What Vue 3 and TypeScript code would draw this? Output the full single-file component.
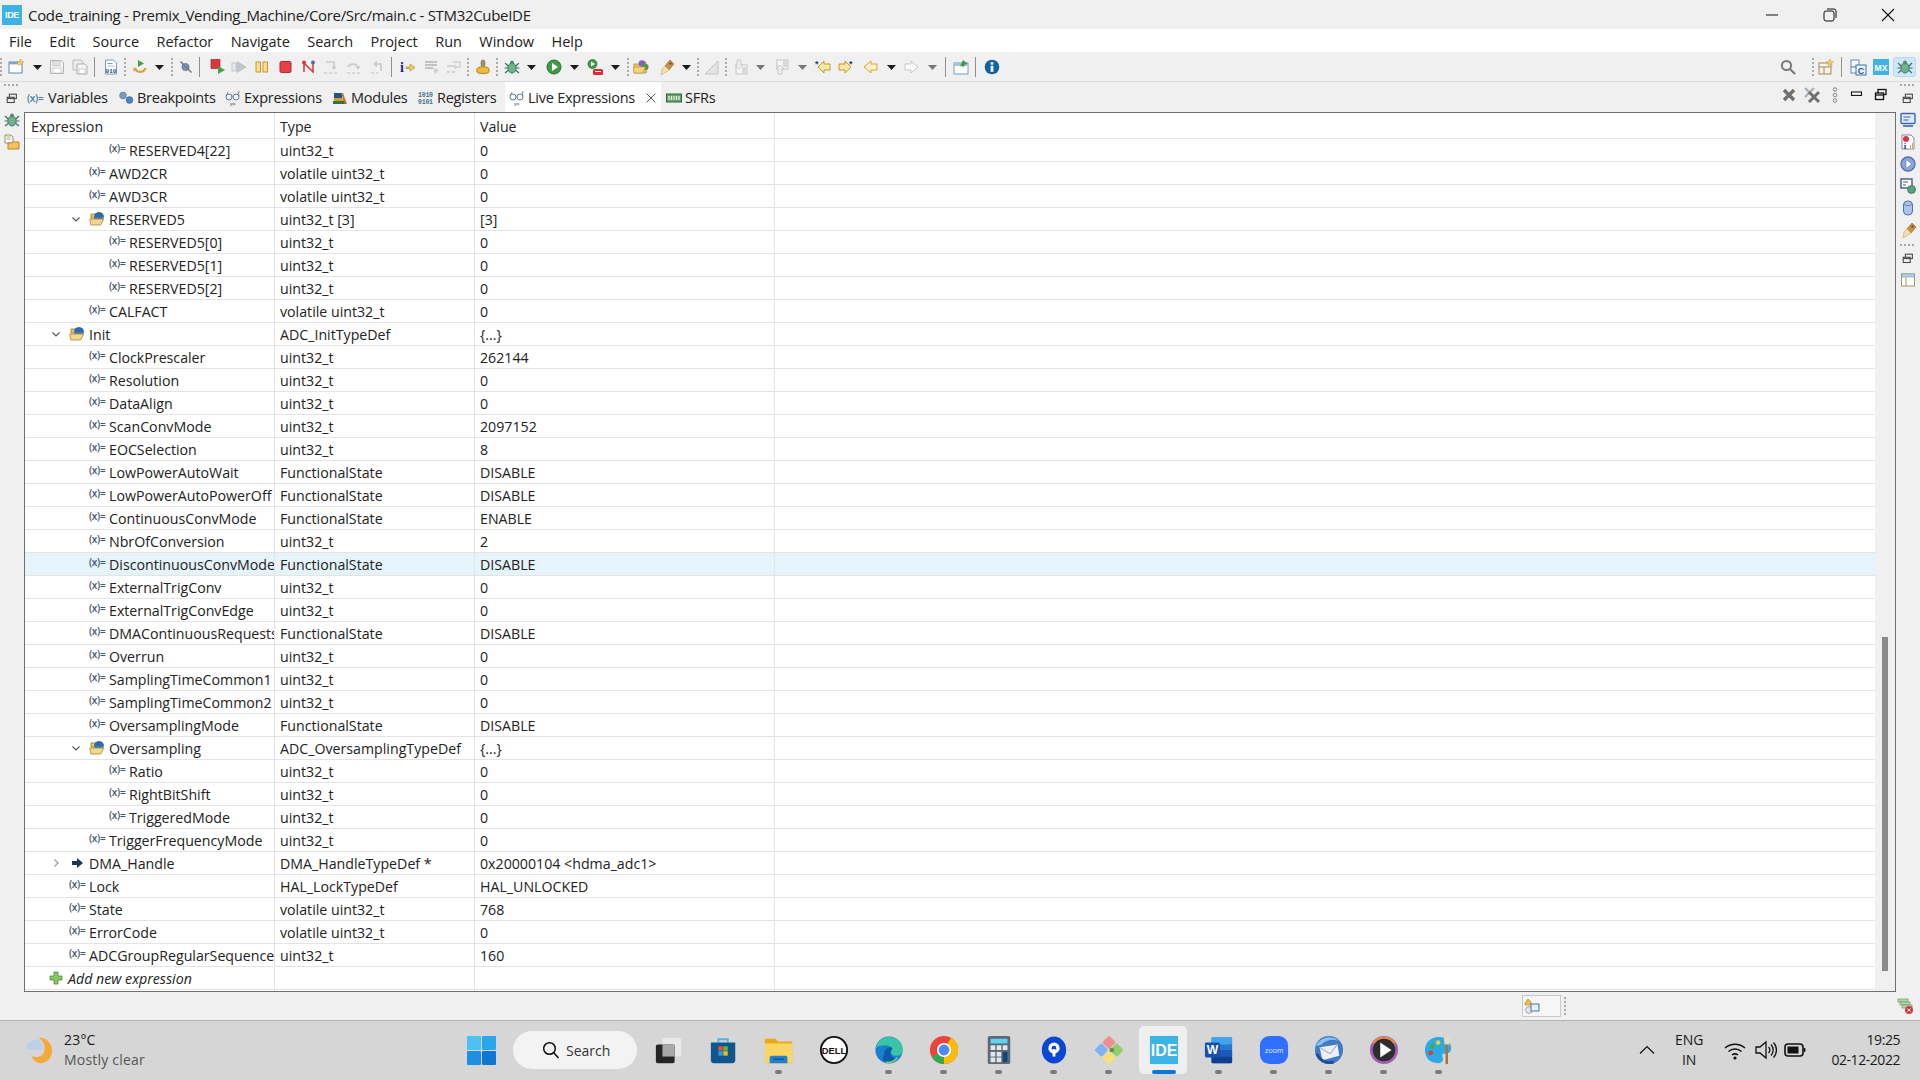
<script setup lang="ts">
import { computed } from 'vue'

type Row = { name: string; type: string; value: string; depth: number; kind?: 'open' | 'ptr'; hot?: boolean }

const icons: Record<string, string> = {
  arrow: '<polygon points="0,6 9,6 4.5,11" fill="#1b1b1b"/>',
  arrowg: '<polygon points="0,6 9,6 4.5,11" fill="#777"/>',
  newf: '<rect x="1" y="3" width="13" height="11" fill="#fff" stroke="#5b86b5"/><rect x="1" y="3" width="9" height="2.4" fill="#7fa6cf"/><path d="M12.5 0l1 2.2 2.3.5-1.7 1.5.4 2.3-2-1.1-2 1.1.4-2.3-1.7-1.5 2.3-.5z" fill="#f2cf55" stroke="#b8962e" stroke-width=".4"/>',
  save: '<path d="M1.5 1.5h11l2 2v11h-13z" fill="#f1f1f1" stroke="#b5b5b5"/><rect x="4" y="2" width="7" height="4.5" fill="#e3e3e3" stroke="#bdbdbd" stroke-width=".7"/><rect x="4" y="9" width="8" height="5" fill="#fff" stroke="#bdbdbd" stroke-width=".7"/>',
  saveall: '<path d="M1 1h8l2 2v8H1z" fill="#ececec" stroke="#bbb"/><path d="M5 5h8l2 2v8H5z" fill="#f4f4f4" stroke="#b0b0b0"/><rect x="7" y="10" width="6" height="4.4" fill="#fff" stroke="#bdbdbd" stroke-width=".7"/>',
  bin: '<path d="M2.5 1h8l3 3v11h-11z" fill="#fff" stroke="#7d9ab8"/><rect x="4.5" y="4" width="5" height="1" fill="#7d9ab8"/><rect x="4.5" y="6.5" width="7" height="1" fill="#a8bdd2"/><text x="8" y="14" text-anchor="middle" font-size="6" font-weight="700" font-family="Liberation Mono" fill="#1f4e85">010</text>',
  skip: '<path d="M3 9a5.5 5.5 0 0 0 10.5 0" fill="none" stroke="#d9a53a" stroke-width="2.4"/><path d="M2 8l3.2 3.5L1 12z" fill="#d9a53a"/><polygon points="6,1 12,4.5 6,8" fill="#4aa04a"/>',
  skipbp: '<circle cx="7.5" cy="8" r="3.6" fill="#7d93ac" stroke="#56697f" stroke-width=".7"/><path d="M2.5 2.5l11 11" stroke="#6d7a88" stroke-width="1.5"/>',
  debugrun: '<rect x="1" y="0.5" width="9" height="9" fill="#d9363e" stroke="#a11d24" stroke-width=".6"/><polygon points="8,7 15,11 8,15" fill="#48a248"/>',
  resume: '<rect x="1" y="4" width="4" height="8" fill="#e6eaf0" stroke="#b8bec6" stroke-width=".8"/><polygon points="6,2.5 15,8 6,13.5" fill="#c3c7cc" stroke="#aeb2b7" stroke-width=".6"/>',
  pause: '<rect x="2" y="3" width="4.5" height="10" fill="#f7dd92" stroke="#c59a2a"/><rect x="9" y="3" width="4.5" height="10" fill="#f7dd92" stroke="#c59a2a"/>',
  stop: '<rect x="2" y="2.5" width="11" height="11" rx="1.5" fill="#e24248" stroke="#b8242b"/>',
  disc: '<path d="M3 13V4l9 9V3" fill="none" stroke="#d9363e" stroke-width="1.5"/><circle cx="3" cy="3.5" r="2" fill="#d9363e"/><circle cx="12" cy="3.5" r="2" fill="#4d6fa5"/>',
  stepin: '<path d="M3 3h8v5" fill="none" stroke="#c9c9c9" stroke-width="1.6"/><path d="M8.5 7.5h5L11 11z" fill="#c9c9c9"/><path d="M1 14h3M6 14h3M11 14h3" stroke="#c0c0c0" stroke-width="1.2"/>',
  stepov: '<path d="M2 8a5.5 5 0 0 1 10 0" fill="none" stroke="#c9c9c9" stroke-width="1.6"/><path d="M9.5 7.5h5L12 11z" fill="#c9c9c9"/><path d="M1 14h3M6 14h3M11 14h3" stroke="#c0c0c0" stroke-width="1.2"/>',
  stepret: '<path d="M11 12V5H6" fill="none" stroke="#c9c9c9" stroke-width="1.6"/><path d="M7 2v6L3 5z" fill="#c9c9c9"/><path d="M1 14h3M6 14h2" stroke="#c0c0c0" stroke-width="1.2"/>',
  instr: '<text x="0" y="13" font-size="14" font-weight="700" font-family="Liberation Serif" fill="#1c2a8c">i</text><path d="M6 8h4V5l5 3.5-5 3.5V9.5H6z" fill="#f3cf5a" stroke="#a68420" stroke-width=".6"/>',
  frame: '<path d="M1 3h12M1 6h12M1 9h8" stroke="#b4b4b4" stroke-width="1.6"/><path d="M9 9l6 2-4 4z" fill="#cfcfcf"/>',
  frame2: '<path d="M1 13h3M6 13h3M1 7h7" stroke="#c9c9c9" stroke-width="1.4"/><path d="M7 3h7v5h-4" fill="none" stroke="#d0d0d0" stroke-width="1.4"/><path d="M10 11l-3-3 3-3z" fill="#d4d4d4"/>',
  chip: '<rect x="6" y="1" width="4" height="7" rx="2" fill="#9a8f7b" stroke="#6d6354" stroke-width=".5"/><path d="M2 10c0-3 12-3 12 0v3c0 2-12 2-12 0z" fill="#f0b93a" stroke="#b8851a"/>',
  bug: '<ellipse cx="8" cy="9" rx="4.2" ry="5" fill="#6fb28f" stroke="#3f7a63"/><circle cx="8" cy="3.5" r="2" fill="#4f8f75"/><path d="M1 4l3 3M15 4l-3 3M0.5 9h3M15.5 9h-3M1 14l3-2.5M15 14l-3-2.5" stroke="#3f6a62" stroke-width="1.1"/>',
  run: '<circle cx="8" cy="8" r="7" fill="#3f9a46" stroke="#2a6f32"/><polygon points="6,4 12,8 6,12" fill="#fff"/>',
  runext: '<circle cx="5.5" cy="5" r="4.5" fill="#3f9a46" stroke="#2a6f32" stroke-width=".7"/><polygon points="4,2.5 8,5 4,7.5" fill="#fff"/><rect x="6" y="10" width="10" height="6" rx="1.5" fill="#e12b31"/><rect x="8" y="12" width="6" height="1" fill="#fff"/>',
  folder: '<path d="M1 5h5l1-2h6v3h2l-2 8H1z" fill="#f1c35b" stroke="#b08a2d" stroke-width=".7"/><circle cx="9" cy="4.5" r="3.3" fill="#7a66b8"/><circle cx="12.5" cy="8" r="3" fill="#4b9a4b"/><path d="M0.5 8h12l-2.5 6H1z" fill="#f6d47f" stroke="#b08a2d" stroke-width=".6"/>',
  pen: '<path d="M12 1l4 4-5 6-4-4z" fill="#c98f4a" stroke="#8b5d28" stroke-width=".6"/><path d="M7 7l4 4-3 2-5 3 1-6z" fill="#f6dfaa" stroke="#c9a66a" stroke-width=".6"/><circle cx="12.5" cy="4.5" r="1.2" fill="#7a4d20"/>',
  marker: '<path d="M1 15L14 2v13z" fill="#e3e3e3" stroke="#c3c3c3"/>',
  annonext: '<rect x="3" y="6" width="11" height="9" fill="#f5f5f5" stroke="#c4c4c4"/><path d="M4 1h4v5h2l-4 4-4-4h2z" fill="#ededed" stroke="#bdbdbd" stroke-width=".7"/><path d="M9 9h4M9 11h4M9 13h4" stroke="#bbb"/>',
  annoprev: '<rect x="3" y="1" width="11" height="9" fill="#f5f5f5" stroke="#c4c4c4"/><path d="M4 15h4v-5h2L6 6l-4 4h2z" fill="#ededed" stroke="#bdbdbd" stroke-width=".7"/><path d="M9 3h4M9 5h4M9 7h4" stroke="#bbb"/>',
  lasted: '<text x="0" y="8" font-size="9" font-weight="700" font-family="Liberation Sans" fill="#1f3d7a">*</text><path d="M15 5v6H9v3L3 8l6-6v3z" fill="#f9e8a8" stroke="#c69a2a"/>',
  nexted: '<text x="11" y="8" font-size="9" font-weight="700" font-family="Liberation Sans" fill="#1f3d7a">*</text><path d="M1 5v6h6v3l6-6-6-6v3z" fill="#f9e8a8" stroke="#c69a2a"/>',
  back: '<path d="M15 5v6H9v3L2 8l7-6v3z" fill="#fdf1c5" stroke="#d6a53a"/>',
  fwd: '<path d="M1 5v6h6v3l7-6-7-6v3z" fill="#fafafa" stroke="#c9c9c9"/>',
  pin: '<rect x="1" y="4" width="14" height="11" fill="#fff" stroke="#7d9ab8"/><rect x="1" y="4" width="14" height="3" fill="#a9c3df"/><path d="M10 1l5 4-3 .6-2 3-1-2.2-2 1z" fill="#3c9a4a"/>',
  info: '<circle cx="8" cy="8" r="7.3" fill="#12619f"/><rect x="6.6" y="6.8" width="2.8" height="6" fill="#fff"/><rect x="6.6" y="3.2" width="2.8" height="2.4" fill="#fff"/>',
  search: '<circle cx="6.5" cy="6.5" r="4.6" fill="none" stroke="#7a7a7a" stroke-width="2"/><path d="M10 10l5 5" stroke="#7a7a7a" stroke-width="2.2"/>',
  perspadd: '<rect x="1" y="4" width="12" height="11" fill="#f7f3e7" stroke="#a08a5f"/><path d="M1 8h12M6 8v7" stroke="#a08a5f"/><path d="M12 0l1 2.4 2.6.3-2 1.7.6 2.5-2.2-1.3-2.2 1.3.6-2.5-2-1.7 2.6-.3z" fill="#f2cf55" stroke="#b8962e" stroke-width=".4"/>',
  cpersp: '<rect x="1" y="1" width="8" height="7" fill="#f4f7fb" stroke="#6c8db0"/><rect x="1" y="8" width="6" height="6" fill="#f4f7fb" stroke="#6c8db0"/><rect x="6" y="6" width="10" height="10" fill="#eaf2fb" stroke="#3d76a8"/><text x="11" y="14.5" text-anchor="middle" font-size="9" font-weight="700" font-family="Liberation Sans" fill="#245a91">C</text>',
  mx: '<rect x="0" y="0" width="16" height="16" fill="#3cb4e5"/><text x="8" y="11.5" text-anchor="middle" font-size="8.6" font-weight="700" font-family="Liberation Sans" fill="#fff">MX</text>',
  restore: '<rect x="5" y="2.5" width="8" height="5" fill="none" stroke="#444" stroke-width="1.2"/><rect x="2.5" y="6" width="8" height="6" fill="#f0f0f0" stroke="#444" stroke-width="1.2"/><path d="M2.5 7.5h8" stroke="#444" stroke-width="1.2"/>',
  rmall: '<path d="M3 3l10 10M13 3L3 13" stroke="#6f6f6f" stroke-width="3.4"/>',
  rmall2: '<path d="M1 1l9 9M10 1L1 10" stroke="#a7b0b8" stroke-width="2.4"/><path d="M5 5l10 10M15 5L5 15" stroke="#6f6f6f" stroke-width="3"/>',
  kebab: '<circle cx="8" cy="2.5" r="1.8" fill="none" stroke="#8a8a8a"/><circle cx="8" cy="8" r="1.8" fill="none" stroke="#8a8a8a"/><circle cx="8" cy="13.5" r="1.8" fill="none" stroke="#8a8a8a"/>',
  vmin: '<rect x="1.5" y="5" width="10" height="3.4" fill="#fff" stroke="#111" stroke-width="1.1"/>',
  vres: '<rect x="5" y="2.5" width="8" height="5" fill="none" stroke="#111" stroke-width="1.3"/><rect x="2.5" y="6" width="8" height="6.5" fill="#f0f0f0" stroke="#111" stroke-width="1.3"/><path d="M2.5 8h8" stroke="#111" stroke-width="1.3"/>',
  files: '<path d="M1 1h6l2 2v6H1z" fill="#fff" stroke="#9c8a62"/><path d="M2.5 3h4M2.5 5h4" stroke="#9c8a62" stroke-width=".8"/><path d="M4 9h4l1-1h6v7H4z" fill="#f4c35a" stroke="#b08a2d"/>',
  console: '<rect x="1" y="1.5" width="14" height="10" rx="1" fill="#dfe9f7" stroke="#3d68ad" stroke-width="1.4"/><path d="M3.5 5h7M3.5 8h5" stroke="#3d68ad" stroke-width="1.1"/><path d="M3 14h10" stroke="#3d68ad" stroke-width="1.6"/>',
  memory: '<path d="M2 1h9l3 3v11H2z" fill="#fff" stroke="#7c8aa5"/><circle cx="6" cy="5" r="3" fill="#d9363e"/><text x="5" y="15" text-anchor="middle" font-size="9" font-weight="700" font-family="Liberation Serif" fill="#1c3a8c">i</text><path d="M10 14v-3h1v3zM12 14V9h1v5z" fill="#e3a82b"/>',
  play: '<circle cx="8" cy="8" r="7" fill="#8ea6d8" stroke="#516fb0" stroke-width="1.3"/><polygon points="6,3.5 12,8 6,12.5" fill="#fff" stroke="#516fb0" stroke-width=".6"/>',
  mbug: '<rect x="1" y="1" width="11" height="9" fill="#fff" stroke="#3d5a8c" stroke-width="1.4"/><path d="M3 4h5M3 7h3" stroke="#3d5a8c"/><circle cx="11.5" cy="11.5" r="4" fill="#5aa27d" stroke="#2d6d52" stroke-width=".7"/>',
  cyl: '<rect x="3.5" y="1" width="9" height="14" rx="4" fill="#a9c3ea" stroke="#4c73ad"/><path d="M3.5 4c2 2 7 2 9 0" fill="none" stroke="#4c73ad" stroke-width=".8"/>',
  layout: '<rect x="1.5" y="2" width="13" height="12" fill="#fff" stroke="#a99465"/><rect x="1.5" y="2" width="13" height="3" fill="#b4d0e8" stroke="#6f93b4" stroke-width=".6"/><path d="M6 5v9" stroke="#a99465"/>',
  plus: '<path d="M6 2h4v4h4v4h-4v4H6v-4H2V6h4z" fill="#8cc36b" stroke="#4c8a35" stroke-width=".8"/>',
  ptr: '<path d="M3 6h5V3l6 5-6 5v-3H3z" fill="#1f3558"/>',
  open: '<path d="M2 6V3h5l1 1h5v3H2z" fill="#eec46a" stroke="#a98930"/><circle cx="10" cy="6" r="4.8" fill="#3a7dbc"/><path d="M5.2 6a4.8 4.8 0 0 1 9.6 0z" fill="#2f6aa8"/><path d="M0.7 8h14l-3 6H1.8z" fill="#f5d68e" stroke="#a98930" stroke-width=".8"/>',
  glasses: '<circle cx="4" cy="7" r="3" fill="none" stroke="#5f7a8c"/><circle cx="11" cy="7" r="3" fill="none" stroke="#5f7a8c"/><path d="M7 6.5c.5-.5.6-.5 1 0M1 6l2-4M14 6l-1-4h2" stroke="#5f7a8c" stroke-width=".8" fill="none"/><text x="7.5" y="15.5" text-anchor="middle" font-size="5.5" font-family="Liberation Sans" fill="#4d6272">x=</text>',
  bp: '<circle cx="5" cy="5.5" r="3.4" fill="#7f99b8" stroke="#5b7694" stroke-width=".6"/><circle cx="11.5" cy="10" r="3.4" fill="#4a85c2" stroke="#336a9e" stroke-width=".6"/>',
  books: '<rect x="1" y="11" width="13" height="3" fill="#3b6f4c"/><rect x="2" y="8" width="10" height="3" fill="#d0a12f"/><rect x="2" y="3" width="8" height="5" fill="#2c4e86"/><path d="M11 3l4 11h-2L9 3z" fill="#a9812d"/>',
  reg: '<text x="0" y="7" font-size="6.6" font-family="Liberation Mono" font-weight="700" fill="#48738c">1010</text><text x="0" y="14" font-size="6.6" font-family="Liberation Mono" font-weight="700" fill="#48738c">0101</text>',
  sfr: '<rect x="0.5" y="4" width="15" height="8" fill="#6aa06a" stroke="#2e6a3c"/><path d="M3 6v4M5.5 6v4M8 6v4M10.5 6v4M13 6v4" stroke="#e7f2e7" stroke-width="1.3"/>',
  close: '<path d="M3 3l10 10M13 3L3 13" stroke="#3a3a3a" stroke-width="1"/>',
  boot: '<path d="M1 5l3-4 3 3v3H1z" fill="#f0bf44" stroke="#a07f1f" stroke-width=".6"/><circle cx="5" cy="12" r="3.4" fill="#e6e6e6" stroke="#8a8a8a" stroke-width=".7"/><rect x="7" y="6" width="8" height="7" fill="#e7f0fa" stroke="#4c73ad"/>',
  errlog: '<rect x="1" y="1" width="10" height="3" fill="#b9d3b0" stroke="#6f9a66" stroke-width=".7"/><rect x="3" y="4" width="10" height="3" fill="#b9d3b0" stroke="#6f9a66" stroke-width=".7"/><rect x="5" y="7" width="10" height="3" fill="#b9d3b0" stroke="#6f9a66" stroke-width=".7"/><circle cx="12" cy="12" r="4" fill="#cf3b42"/><path d="M10.5 10.5l3 3M13.5 10.5l-3 3" stroke="#fff"/>'
}

const tbIcons: Record<string, string> = {
  taskview: '<rect x="9" y="3" width="20" height="20" rx="2" fill="#e9e9e9"/><rect x="2" y="10" width="20" height="20" rx="2" fill="#252525"/><rect x="9" y="10" width="13" height="13" fill="#a9a9a9"/>',
  store: '<path d="M10 8V4.5h10V8" fill="none" stroke="#4ab5ea" stroke-width="2"/><path d="M2 8h26v19a3 3 0 0 1-3 3H5a3 3 0 0 1-3-3z" fill="#11558f"/><rect x="10" y="12" width="4.7" height="4.7" fill="#e8522d"/><rect x="15.3" y="12" width="4.7" height="4.7" fill="#6cb52d"/><rect x="10" y="17.3" width="4.7" height="4.7" fill="#2b9be8"/><rect x="15.3" y="17.3" width="4.7" height="4.7" fill="#f6bb16"/>',
  folder: '<path d="M1 4h11l3 3h15v23H1z" fill="#e7ac1e"/><rect x="1" y="9" width="29" height="21" rx="1" fill="#fbd563"/><path d="M6 30v-6a2 2 0 0 1 2-2h15a2 2 0 0 1 2 2v6z" fill="#1e82cc"/><rect x="10" y="25" width="11" height="1.4" fill="#0c4f8c"/>',
  dell: '<circle cx="16" cy="16" r="14" fill="#fff" stroke="#111" stroke-width="2"/><text x="16" y="20" text-anchor="middle" font-size="10" font-weight="700" font-family="Liberation Sans" fill="#111">DELL</text>',
  edge: '<circle cx="16" cy="16" r="14.5" fill="#1b7fd0"/><path d="M2 14C4 4 14 0 21 3c6 2 10 8 9.500 14-.5 4-5 6-9 5-3-1-4-3-3-5 1-3-1-6-6-6-5 0-9 1-10.500 3z" fill="#38c6a6"/><path d="M11 20c0-4 3-7 7-7 2 0 2 2 0 4-1 3 0 7 5 8-3 4-9 5-13 2-1-2-1-4 1-7z" fill="#0f5aa8"/><path d="M25 24c-3 4-8 6-12 5" stroke="#6fd36f" stroke-width="2" fill="none"/>',
  chrome: '<circle cx="16" cy="16" r="15" fill="#e8453c"/><path d="M16 16L3 23.5A15 15 0 0 0 16 31l7.5-13z" fill="#34a853"/><path d="M16 16h15a15 15 0 0 1-15 15z" fill="#fbbc05"/><path d="M16 16L23.5 3A15 15 0 0 1 31 16z" fill="#fbbc05"/><circle cx="16" cy="16" r="7.5" fill="#fff"/><circle cx="16" cy="16" r="5.8" fill="#4c8bf5"/>',
  calc: '<rect x="4" y="1" width="24" height="30" rx="2" fill="#5d6a75"/><rect x="7" y="4" width="18" height="5" fill="#5fd3f3"/><g fill="#e3e7ea"><rect x="7" y="11" width="5" height="5"/><rect x="13.5" y="11" width="5" height="5"/><rect x="20" y="11" width="5" height="5"/><rect x="7" y="18" width="5" height="5"/><rect x="13.5" y="18" width="5" height="5"/><rect x="7" y="24" width="5" height="5"/><rect x="13.5" y="24" width="5" height="5"/></g><rect x="20" y="18" width="5" height="11" fill="#14467a"/>',
  pin: '<ellipse cx="16" cy="16" rx="13" ry="14.5" fill="#0a48d4"/><circle cx="16" cy="14" r="6" fill="#fff"/><circle cx="16" cy="14" r="2.5" fill="#0a48d4"/><rect x="14.5" y="15" width="3" height="8" fill="#fff"/>',
  git: '<g transform="rotate(45 16 16)"><rect x="5" y="5" width="10.5" height="10.5" rx="1.5" fill="#ee8e8e"/><rect x="16.5" y="5" width="10.5" height="10.5" rx="1.5" fill="#8fd06c"/><rect x="16.5" y="16.5" width="10.5" height="10.5" rx="1.5" fill="#f7e17a"/><rect x="5" y="16.5" width="10.5" height="10.5" rx="1.5" fill="#7fb2f5"/></g><circle cx="19" cy="16" r="2.5" fill="#6b8f42"/>',
  ide: '<rect x="1" y="1" width="30" height="30" fill="#3cb4e5"/><text x="16" y="22" text-anchor="middle" font-size="17" font-weight="700" font-family="Liberation Sans" fill="#fff">IDE</text>',
  word: '<rect x="8" y="2" width="22" height="28" rx="2" fill="#2a77d0"/><rect x="8" y="2" width="22" height="8" rx="2" fill="#41a5ee"/><rect x="8" y="16" width="22" height="7" fill="#185abd"/><rect x="8" y="23" width="22" height="7" rx="1" fill="#103f91"/><rect x="1" y="8" width="16" height="16" rx="1.5" fill="#1450ad"/><text x="9" y="20.5" text-anchor="middle" font-size="13" font-weight="700" font-family="Liberation Sans" fill="#fff">W</text>',
  zoom: '<rect x="1" y="1" width="30" height="30" rx="10" fill="#2e6fff"/><text x="16" y="19" text-anchor="middle" font-size="8" font-family="Liberation Sans" fill="#dfe9ff">zoom</text>',
  bird: '<circle cx="16" cy="16" r="15" fill="#3f7cc4"/><path d="M2 12C6 3 17-1 26 6c-6-2-13-1-18 4z" fill="#8cc0ee"/><path d="M6 13l19-3 2 12-18 5z" fill="#eef0f6"/><path d="M6 13l11 7 8-10" fill="none" stroke="#a8b5cc" stroke-width="1.2"/><path d="M3 20c3 7 10 11 18 9" stroke="#1d4f98" stroke-width="3" fill="none"/>',
  player: '<circle cx="16" cy="16" r="15" fill="#a25fb0"/><path d="M3 9A15 15 0 0 1 29 9z" fill="#e88a45"/><circle cx="16" cy="16" r="12" fill="#2d2d2d"/><polygon points="12,8 24,16 12,24" fill="#fff"/>',
  paint: '<path d="M16 2c8 0 13 5 13 12 0 5-4 6-7 6-3 0-3 2-2 4s0 6-5 6C6 30 1 24 1 16 1 8 7 2 16 2z" fill="#2fa8e6"/><circle cx="9" cy="12" r="2.6" fill="#3fae49"/><circle cx="7" cy="19" r="2.6" fill="#d8432e"/><circle cx="15" cy="8" r="2.4" fill="#f2d02e"/><rect x="23" y="9" width="2.6" height="22" fill="#a7762b"/><path d="M21 3h7l-1 7h-5z" fill="#e8dcc0"/>',
  wifi: '<g fill="none" stroke="#111" stroke-width="1.5"><path d="M2 10a15 15 0 0 1 20 0"/><path d="M5.5 13.5a10 10 0 0 1 13 0"/><path d="M9 17a5 5 0 0 1 6 0"/></g><circle cx="12" cy="20" r="1.6" fill="#111"/>',
  sound: '<path d="M3 9h4l6-5v16l-6-5H3z" fill="none" stroke="#111" stroke-width="1.3"/><g fill="none" stroke="#111" stroke-width="1.3"><path d="M15.5 9a4 4 0 0 1 0 6"/><path d="M18 6.5a8 8 0 0 1 0 11"/><path d="M20.5 4.5a11 11 0 0 1 0 15"/></g>',
  battery: '<rect x="2" y="6" width="18" height="12" rx="3" fill="none" stroke="#111" stroke-width="1.6"/><rect x="4.5" y="8.5" width="11" height="7" fill="#111"/><rect x="20.5" y="10" width="2" height="4" rx="1" fill="#111"/>'
}

const menus = ['File', 'Edit', 'Source', 'Refactor', 'Navigate', 'Search', 'Project', 'Run', 'Window', 'Help']

// left edge of every toolbar item, the cell width is the distance to the next one
const toolbarStops: [string, number][] = [
  ['grip', 2], ['newf', 10], ['arrow', 35], ['save', 51], ['saveall', 74], ['sep', 96], ['bin', 105], ['grip', 126],
  ['skip', 134], ['arrow', 157], ['grip', 173], ['skipbp', 180], ['sep', 201], ['debugrun', 212], ['resume', 233],
  ['pause', 256], ['stop', 280], ['disc', 303], ['stepin', 325], ['stepov', 348], ['stepret', 372], ['sep', 393],
  ['instr', 402], ['frame', 426], ['frame2', 448], ['grip', 469], ['chip', 477], ['grip', 498], ['bug', 506],
  ['arrow', 529], ['run', 548], ['arrow', 572], ['runext', 589], ['arrow', 613], ['grip', 629], ['folder', 635],
  ['pen', 660], ['arrow', 684], ['grip', 699], ['marker', 706], ['grip', 727], ['annonext', 735], ['arrowg', 758],
  ['annoprev', 776], ['arrowg', 800], ['lasted', 817], ['nexted', 840], ['back', 864], ['arrow', 889], ['fwd', 906],
  ['arrowg', 930], ['sep', 947], ['pin', 955], ['sep', 977], ['info', 986]
]

const toolbar = computed(() =>
  toolbarStops.map(([name, at], i) => ({
    name,
    width: (toolbarStops[i + 1]?.[1] ?? at + 16) - at
  }))
)

const tabs = [
  { label: 'Variables', icon: 'x', width: 91 },
  { label: 'Breakpoints', icon: 'bp', width: 107 },
  { label: 'Expressions', icon: 'glasses', width: 107 },
  { label: 'Modules', icon: 'books', width: 86 },
  { label: 'Registers', icon: 'reg', width: 90 },
  { label: 'Live Expressions', icon: 'glasses', width: 156, active: true },
  { label: 'SFRs', icon: 'sfr', width: 60 }
]

const rightIcons = ['restore', 'console', 'memory', 'play', 'mbug', 'cyl', 'pen']

const rows: Row[] = [
  { name: 'RESERVED4[22]', type: 'uint32_t', value: '0', depth: 2 },
  { name: 'AWD2CR', type: 'volatile uint32_t', value: '0', depth: 1 },
  { name: 'AWD3CR', type: 'volatile uint32_t', value: '0', depth: 1 },
  { name: 'RESERVED5', type: 'uint32_t [3]', value: '[3]', depth: 1, kind: 'open' },
  { name: 'RESERVED5[0]', type: 'uint32_t', value: '0', depth: 2 },
  { name: 'RESERVED5[1]', type: 'uint32_t', value: '0', depth: 2 },
  { name: 'RESERVED5[2]', type: 'uint32_t', value: '0', depth: 2 },
  { name: 'CALFACT', type: 'volatile uint32_t', value: '0', depth: 1 },
  { name: 'Init', type: 'ADC_InitTypeDef', value: '{...}', depth: 0, kind: 'open' },
  { name: 'ClockPrescaler', type: 'uint32_t', value: '262144', depth: 1 },
  { name: 'Resolution', type: 'uint32_t', value: '0', depth: 1 },
  { name: 'DataAlign', type: 'uint32_t', value: '0', depth: 1 },
  { name: 'ScanConvMode', type: 'uint32_t', value: '2097152', depth: 1 },
  { name: 'EOCSelection', type: 'uint32_t', value: '8', depth: 1 },
  { name: 'LowPowerAutoWait', type: 'FunctionalState', value: 'DISABLE', depth: 1 },
  { name: 'LowPowerAutoPowerOff', type: 'FunctionalState', value: 'DISABLE', depth: 1 },
  { name: 'ContinuousConvMode', type: 'FunctionalState', value: 'ENABLE', depth: 1 },
  { name: 'NbrOfConversion', type: 'uint32_t', value: '2', depth: 1 },
  { name: 'DiscontinuousConvMode', type: 'FunctionalState', value: 'DISABLE', depth: 1, hot: true },
  { name: 'ExternalTrigConv', type: 'uint32_t', value: '0', depth: 1 },
  { name: 'ExternalTrigConvEdge', type: 'uint32_t', value: '0', depth: 1 },
  { name: 'DMAContinuousRequests', type: 'FunctionalState', value: 'DISABLE', depth: 1 },
  { name: 'Overrun', type: 'uint32_t', value: '0', depth: 1 },
  { name: 'SamplingTimeCommon1', type: 'uint32_t', value: '0', depth: 1 },
  { name: 'SamplingTimeCommon2', type: 'uint32_t', value: '0', depth: 1 },
  { name: 'OversamplingMode', type: 'FunctionalState', value: 'DISABLE', depth: 1 },
  { name: 'Oversampling', type: 'ADC_OversamplingTypeDef', value: '{...}', depth: 1, kind: 'open' },
  { name: 'Ratio', type: 'uint32_t', value: '0', depth: 2 },
  { name: 'RightBitShift', type: 'uint32_t', value: '0', depth: 2 },
  { name: 'TriggeredMode', type: 'uint32_t', value: '0', depth: 2 },
  { name: 'TriggerFrequencyMode', type: 'uint32_t', value: '0', depth: 1 },
  { name: 'DMA_Handle', type: 'DMA_HandleTypeDef *', value: '0x20000104 <hdma_adc1>', depth: 0, kind: 'ptr' },
  { name: 'Lock', type: 'HAL_LockTypeDef', value: 'HAL_UNLOCKED', depth: 0 },
  { name: 'State', type: 'volatile uint32_t', value: '768', depth: 0 },
  { name: 'ErrorCode', type: 'volatile uint32_t', value: '0', depth: 0 },
  { name: 'ADCGroupRegularSequence', type: 'uint32_t', value: '160', depth: 0 }
]

const taskbarApps = [
  { icon: 'taskview', dot: false },
  { icon: 'store', dot: false },
  { icon: 'folder', dot: true },
  { icon: 'dell', dot: false },
  { icon: 'edge', dot: true },
  { icon: 'chrome', dot: true },
  { icon: 'calc', dot: true },
  { icon: 'pin', dot: true },
  { icon: 'git', dot: true },
  { icon: 'ide', dot: false, active: true },
  { icon: 'word', dot: true },
  { icon: 'zoom', dot: true },
  { icon: 'bird', dot: true },
  { icon: 'player', dot: true },
  { icon: 'paint', dot: true }
]
</script>

<template>
  <div class="ide">
    <header class="titlebar">
      <span class="titlebar__logo">IDE</span>
      <span class="titlebar__text">Code_training - Premix_Vending_Machine/Core/Src/main.c - STM32CubeIDE</span>
      <div class="winctl">
        <svg viewBox="0 0 16 16" class="winctl__btn"><path d="M2 8h12" stroke="#111" stroke-width="1" /></svg>
        <svg viewBox="0 0 16 16" class="winctl__btn"><rect x="2" y="4" width="10" height="10" rx="2" fill="none" stroke="#111" /><path d="M5 2h7a2 2 0 0 1 2 2v7" fill="none" stroke="#111" /></svg>
        <svg viewBox="0 0 16 16" class="winctl__btn"><path d="M2 2l12 12M14 2L2 14" stroke="#111" stroke-width="1.1" /></svg>
      </div>
    </header>

    <nav class="menubar">
      <span v-for="m in menus" :key="m">{{ m }}</span>
    </nav>

    <div class="toolbar">
      <div v-for="(t, i) in toolbar" :key="i" class="toolbar__cell" :style="{ width: t.width + 'px' }">
        <span v-if="t.name === 'grip'" class="grip"></span>
        <span v-else-if="t.name === 'sep'" class="sep"></span>
        <svg v-else class="ic" viewBox="0 0 16 16" v-html="icons[t.name]"></svg>
      </div>
      <div class="toolbar__right">
        <svg class="ic" viewBox="0 0 16 16" v-html="icons.search"></svg>
        <span class="grip"></span>
        <svg class="ic" viewBox="0 0 16 16" v-html="icons.perspadd"></svg>
        <span class="sep"></span>
        <svg class="ic" viewBox="0 0 16 16" v-html="icons.cpersp"></svg>
        <svg class="ic" viewBox="0 0 16 16" v-html="icons.mx"></svg>
        <span class="persp-on"><svg class="ic" viewBox="0 0 16 16" v-html="icons.bug"></svg></span>
      </div>
    </div>

    <div class="workbench">
      <aside class="stack stack--left">
        <span class="hgrip"></span>
        <svg class="ic ic--sm" viewBox="0 0 16 16" v-html="icons.restore"></svg>
        <svg class="ic" viewBox="0 0 16 16" v-html="icons.bug"></svg>
        <svg class="ic" viewBox="0 0 16 16" v-html="icons.files"></svg>
      </aside>

      <main class="view">
        <div class="tabs">
          <div
            v-for="t in tabs"
            :key="t.label"
            class="tab"
            :class="{ 'tab--active': t.active }"
            :style="{ width: t.width + 'px' }"
          >
            <span v-if="t.icon === 'x'" class="var var--tab">(x)=</span>
            <svg v-else class="ic" viewBox="0 0 16 16" v-html="icons[t.icon]"></svg>
            <span class="tab__label">{{ t.label }}</span>
            <svg v-if="t.active" class="tab__close" viewBox="0 0 16 16" v-html="icons.close"></svg>
          </div>
          <div class="tabs__tools">
            <svg class="ic" viewBox="0 0 16 16" v-html="icons.rmall"></svg>
            <svg class="ic" viewBox="0 0 16 16" v-html="icons.rmall2"></svg>
            <svg class="ic" viewBox="0 0 16 16" v-html="icons.kebab"></svg>
            <svg class="ic" viewBox="0 0 16 16" v-html="icons.vmin"></svg>
            <svg class="ic" viewBox="0 0 16 16" v-html="icons.vres"></svg>
          </div>
        </div>

        <div class="tree">
          <div class="tree__body">
            <div class="row row--head">
              <div class="cell cell--expr"><span class="head">Expression</span></div>
              <div class="cell cell--type">Type</div>
              <div class="cell cell--value">Value</div>
              <div class="cell cell--rest"></div>
            </div>
            <div v-for="r in rows" :key="r.name" class="row" :class="{ 'row--hot': r.hot }">
              <div class="cell cell--expr">
                <span class="expr" :class="'expr--d' + r.depth">
                  <svg v-if="r.kind === 'open'" class="twist" viewBox="0 0 10 10"><path d="M1.5 3.5L5 7l3.500-3.500" fill="none" stroke="#555" stroke-width="1.2" /></svg>
                  <svg v-else-if="r.kind === 'ptr'" class="twist" viewBox="0 0 10 10"><path d="M3.5 1.500L7 5 3.500 8.500" fill="none" stroke="#999" stroke-width="1.2" /></svg>
                  <span v-if="!r.kind" class="var">(x)=</span>
                  <svg v-else class="ic" viewBox="0 0 16 16" v-html="icons[r.kind]"></svg>
                  <span class="expr__name">{{ r.name }}</span>
                </span>
              </div>
              <div class="cell cell--type">{{ r.type }}</div>
              <div class="cell cell--value">{{ r.value }}</div>
              <div class="cell cell--rest"></div>
            </div>
            <div class="row">
              <div class="cell cell--expr row-add">
                <svg class="ic" viewBox="0 0 16 16" v-html="icons.plus"></svg>
                <em>Add new expression</em>
              </div>
              <div class="cell cell--type"></div>
              <div class="cell cell--value"></div>
              <div class="cell cell--rest"></div>
            </div>
            <div class="row row--stub">
              <div class="cell cell--expr"></div>
              <div class="cell cell--type"></div>
              <div class="cell cell--value"></div>
              <div class="cell cell--rest"></div>
            </div>
          </div>
          <div class="scroll"><span class="scroll__thumb"></span></div>
        </div>
      </main>

      <aside class="stack stack--right">
        <span class="hgrip"></span>
        <svg v-for="n in rightIcons" :key="n" class="ic" :class="{ 'ic--sm': n === 'restore' }" viewBox="0 0 16 16" v-html="icons[n]"></svg>
        <span class="hgrip"></span>
        <svg class="ic ic--sm" viewBox="0 0 16 16" v-html="icons.restore"></svg>
        <svg class="ic" viewBox="0 0 16 16" v-html="icons.layout"></svg>
      </aside>
    </div>

    <footer class="status">
      <span class="status__box"><svg class="ic" viewBox="0 0 16 16" v-html="icons.boot"></svg></span>
      <span class="grip"></span>
      <svg class="ic status__err" viewBox="0 0 16 16" v-html="icons.errlog"></svg>
    </footer>

    <div class="taskbar">
      <div class="weather">
        <svg class="weather__icon" viewBox="0 0 30 32">
          <path d="M14 3c10-1 15 7 15 14 0 8-7 14-14 13-4-1-7-4-8-7 9 2 14-2 14-9 0-5-3-9-7-11z" fill="#f4a93a" />
          <path d="M5 16a4 4 0 0 1 1-8 6 6 0 0 1 11 1 4 4 0 0 1 0 7z" fill="#bcd0ea" />
        </svg>
        <div class="weather__text">
          <span>23°C</span>
          <span class="weather__sub">Mostly clear</span>
        </div>
      </div>
      <svg class="start" viewBox="0 0 30 30">
        <rect x="0" y="0" width="14.5" height="14.5" rx="1" fill="#4cc2f1" />
        <rect x="15.5" y="0" width="14.5" height="14.5" rx="1" fill="#2aa6ec" />
        <rect x="0" y="15.5" width="14.5" height="14.5" rx="1" fill="#1d90e4" />
        <rect x="15.5" y="15.5" width="14.5" height="14.5" rx="1" fill="#0c78d4" />
      </svg>
      <div class="pill">
        <svg class="pill__icon" viewBox="0 0 18 18"><circle cx="7.5" cy="7.5" r="5.8" fill="none" stroke="#111" stroke-width="1.5" /><path d="M11.5 11.5l5 5.5" stroke="#111" stroke-width="1.6" /></svg>
        <span>Search</span>
      </div>
      <div class="apps">
        <div v-for="a in taskbarApps" :key="a.icon" class="app" :class="{ 'app--on': a.active }">
          <svg class="app__icon" viewBox="0 0 32 32" v-html="tbIcons[a.icon]"></svg>
          <span v-if="a.dot" class="app__dot"></span>
          <span v-if="a.active" class="app__bar"></span>
        </div>
      </div>
      <div class="tray">
        <svg class="tray__chev" viewBox="0 0 16 10"><path d="M1 8.5L8 1.5l7 7" fill="none" stroke="#111" stroke-width="1.2" /></svg>
        <div class="tray__lang"><span>ENG</span><span>IN</span></div>
        <svg class="tray__ic" viewBox="0 0 24 24" v-html="tbIcons.wifi"></svg>
        <svg class="tray__ic" viewBox="0 0 24 24" v-html="tbIcons.sound"></svg>
        <svg class="tray__ic" viewBox="0 0 24 24" v-html="tbIcons.battery"></svg>
        <div class="tray__clock"><span>19:25</span><span>02-12-2022</span></div>
      </div>
    </div>
  </div>
</template>

<style>
html,
body {
  margin: 0;
  background: #f0f0f0;
}
</style>

<style scoped>
.ide {
  width: 1920px;
  height: 1080px;
  display: flex;
  flex-direction: column;
  overflow: hidden;
  font-family: 'Open Sans', 'Noto Sans', sans-serif;
  font-size: 14.2px;
  color: #222;
  background: #f0f0f0;
}

.ic {
  width: 16px;
  height: 16px;
  flex-shrink: 0;
  overflow: visible;
}

.ic--sm {
  width: 14px;
  height: 14px;
}

.grip {
  width: 2px;
  height: 18px;
  flex-shrink: 0;
  background: repeating-linear-gradient(180deg, #a9a9a9 0 2px, transparent 2px 4px);
}

.sep {
  width: 1px;
  height: 20px;
  flex-shrink: 0;
  background: #8f8f8f;
}

.titlebar {
  height: 29px;
  flex-shrink: 0;
  display: flex;
  align-items: center;
  padding-left: 2px;
  font-size: 15px;
  letter-spacing: -0.32px;
  background: #f0f0f0;
}

.titlebar__logo {
  width: 20px;
  height: 20px;
  margin-right: 6px;
  display: flex;
  align-items: center;
  justify-content: center;
  background: #3fb2e4;
  color: #fff;
  font: 700 9px 'Liberation Sans', sans-serif;
}

.winctl {
  margin-left: auto;
  display: flex;
  gap: 42px;
  padding-right: 24px;
}

.winctl__btn {
  width: 16px;
  height: 16px;
}

.menubar {
  height: 23px;
  flex-shrink: 0;
  display: flex;
  align-items: center;
  gap: 17.4px;
  padding: 1px 0 0 9px;
  box-sizing: border-box;
  background: #fff;
  font-size: 14.5px;
}

.toolbar {
  height: 30px;
  box-sizing: border-box;
  flex-shrink: 0;
  display: flex;
  align-items: center;
  padding-top: 1px;
  border-bottom: 1px solid #dcdcdc;
}

.toolbar__cell {
  flex-shrink: 0;
  height: 100%;
  display: flex;
  align-items: center;
}

.toolbar__right {
  margin-left: auto;
  display: flex;
  align-items: center;
  padding-right: 4px;
}

.toolbar__right > :nth-child(1) {
  margin-right: 16px;
}

.toolbar__right > :nth-child(2) {
  margin-right: 4px;
}

.toolbar__right > :nth-child(3) {
  margin-right: 7px;
}

.toolbar__right > :nth-child(4) {
  margin-right: 8px;
}

.toolbar__right > :nth-child(5) {
  margin-right: 7px;
}

.toolbar__right > :nth-child(6) {
  margin-right: 4px;
}

.persp-on {
  box-sizing: border-box;
  width: 23px;
  height: 20px;
  display: flex;
  align-items: center;
  justify-content: center;
  border: 1px solid #b6d8f2;
  border-radius: 3px;
  background: #cde6f9;
}

.workbench {
  flex: 1;
  min-height: 0;
  display: flex;
}

.stack {
  width: 24px;
  flex-shrink: 0;
  display: flex;
  flex-direction: column;
  align-items: center;
  gap: 6px;
  padding-top: 2px;
}

.hgrip {
  width: 16px;
  height: 2px;
  background: repeating-linear-gradient(90deg, #a9a9a9 0 2px, transparent 2px 4px);
}

.view {
  flex: 1;
  min-width: 0;
  display: flex;
  flex-direction: column;
}

.tabs {
  height: 30px;
  display: flex;
  align-items: stretch;
  flex-shrink: 0;
}

.tab {
  box-sizing: border-box;
  display: flex;
  align-items: center;
  gap: 3px;
  padding: 1px 0 0 3px;
  font-size: 14.5px;
  letter-spacing: -0.25px;
  white-space: nowrap;
}

.tab--active {
  background: #fff;
  padding-left: 4px;
  gap: 3px;
}

.tab--active + .tab {
  padding-left: 5px;
}

.tab__close {
  width: 14px;
  height: 14px;
  margin-left: 6px;
}

.var {
  width: 19px;
  flex-shrink: 0;
  font-size: 10px;
  letter-spacing: -0.3px;
  color: #44566a;
  font-weight: 600;
  line-height: 1;
  position: relative;
  top: -2px;
}

.var--tab {
  color: #4a7fb0;
  top: 0;
  margin-right: -1px;
}

.tabs__tools {
  margin-left: auto;
  display: flex;
  align-items: center;
  gap: 7px;
  padding-right: 7px;
  padding-bottom: 4px;
}

.tree {
  flex: 1;
  min-height: 0;
  display: flex;
  background: #fff;
  border: 1px solid #6f6f6f;
  overflow: hidden;
}

.tree__body {
  flex: 1;
  min-width: 0;
  display: flex;
  flex-direction: column;
}

.scroll {
  width: 20px;
  flex-shrink: 0;
  background: #f0f0f0;
  display: flex;
  flex-direction: column;
  justify-content: flex-end;
  padding-bottom: 20px;
  align-items: center;
}

.scroll__thumb {
  width: 6px;
  height: 334px;
  background: #8a8a8a;
}

.row {
  height: 23px;
  display: flex;
  flex-shrink: 0;
  box-sizing: border-box;
  border-bottom: 1px solid #e4e4e4;
}

.row--head {
  height: 26px;
}

.row--head .cell {
  padding-top: 1px;
}

.row--hot {
  background: #e5f3fb;
}

.row--stub {
  height: 3px;
  border-bottom: 0;
}

.cell {
  box-sizing: border-box;
  flex-shrink: 0;
  display: flex;
  align-items: center;
  white-space: nowrap;
  overflow: hidden;
  border-right: 1px solid #e4e4e4;
  padding-left: 5px;
}

.cell--expr {
  width: 250px;
  padding-left: 0;
}

.cell--type {
  width: 200px;
}

.cell--value {
  width: 300px;
}

.cell--rest {
  flex: 1;
  border-right: 0;
}

.head {
  padding-left: 6px;
}

.expr {
  display: flex;
  align-items: center;
  position: relative;
}

.expr--d0 {
  padding-left: 44px;
}

.expr--d1 {
  padding-left: 64px;
}

.expr--d2 {
  padding-left: 84px;
}

.expr .ic {
  margin-right: 3px;
}

.expr__name {
  margin-left: 1px;
}

/* twisties hang to the left of the node icon */
.twist {
  position: absolute;
  width: 10px;
  height: 10px;
  margin-left: -18px;
  top: 50%;
  transform: translateY(-50%);
}

.row-add {
  padding-left: 23px;
  gap: 4px;
}

.status {
  height: 28px;
  flex-shrink: 0;
  display: flex;
  align-items: center;
  padding-left: 1522px;
}

.status__box {
  width: 39px;
  height: 22px;
  box-sizing: border-box;
  display: flex;
  align-items: center;
  padding-left: 1px;
  border: 1px solid #c9c9c9;
  background: #f6f6f6;
  margin-right: 3px;
}

.status__err {
  margin-left: 331px;
}

.taskbar {
  height: 60px;
  box-sizing: border-box;
  flex-shrink: 0;
  display: flex;
  align-items: center;
  padding-bottom: 1px;
  border-top: 1px solid #b4b4b4;
  background: #d6d6d6;
}

.weather {
  width: 467px;
  flex-shrink: 0;
  display: flex;
  align-items: center;
  padding-left: 25px;
  box-sizing: border-box;
  gap: 11px;
}

.weather__icon {
  width: 28px;
  height: 32px;
}

.weather__text {
  display: flex;
  flex-direction: column;
  font-size: 14px;
  line-height: 20px;
  letter-spacing: 0.2px;
  color: #1a1a1a;
}

.weather__sub {
  color: #555;
}

.start {
  width: 29px;
  height: 29px;
  flex-shrink: 0;
  margin-right: 17px;
}

.pill {
  width: 124px;
  height: 38px;
  flex-shrink: 0;
  box-sizing: border-box;
  display: flex;
  align-items: center;
  gap: 6px;
  padding-left: 29px;
  border-radius: 19px;
  background: #f3f3f3;
  font-size: 14px;
  color: #333;
}

.pill__icon {
  width: 18px;
  height: 18px;
}

.apps {
  display: flex;
  margin-left: 4px;
  height: 100%;
}

.app {
  position: relative;
  width: 55px;
  height: 100%;
  display: flex;
  align-items: center;
  justify-content: center;
}

.app__icon {
  width: 30px;
  height: 30px;
}

.app--on::before {
  content: '';
  position: absolute;
  left: 3px;
  right: 4px;
  top: 5px;
  bottom: 5px;
  border-radius: 5px;
  background: #efefef;
}

.app--on .app__icon {
  position: relative;
}

.app__dot {
  position: absolute;
  left: 50%;
  bottom: 5px;
  width: 7px;
  height: 4px;
  margin-left: -3.5px;
  border-radius: 2px;
  background: #7b7b7b;
}

.app__bar {
  position: absolute;
  left: 50%;
  bottom: 5px;
  width: 24px;
  height: 4px;
  margin-left: -12px;
  border-radius: 2px;
  background: #0a78d4;
}

.tray {
  margin-left: auto;
  display: flex;
  align-items: center;
  padding-right: 20px;
  color: #1a1a1a;
}

.tray__chev {
  width: 16px;
  height: 10px;
  margin-right: 20px;
}

.tray__lang {
  display: flex;
  flex-direction: column;
  align-items: center;
  font-size: 14px;
  line-height: 20px;
  margin-right: 20px;
}

.tray__ic {
  width: 24px;
  height: 24px;
  margin-right: 6px;
}

.tray__clock {
  display: flex;
  flex-direction: column;
  align-items: flex-end;
  font-size: 14px;
  line-height: 20px;
  letter-spacing: -0.45px;
  margin-left: 18px;
}
</style>
